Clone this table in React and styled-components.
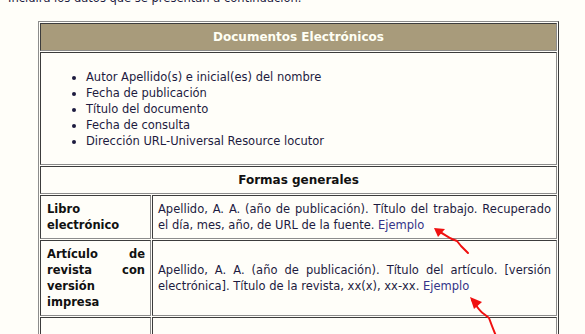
import React from 'react';
import styled, { createGlobalStyle } from 'styled-components';

const GlobalStyle = createGlobalStyle`
	html, body {
		margin: 0;
		background: #fffef9;
		overflow: hidden;
	}
	body {
		font-family: 'DejaVu Sans', Verdana, sans-serif;
		font-size: 11.5px;
		color: #1d1b3f;
	}
`;

const Page = styled.div`
	position: relative;
	width: 585px;
	height: 334px;
	overflow: hidden;
`;

// the page is scrolled a little, so the intro line is cut at the top
const Scrolled = styled.div`
	margin-top: -10px;
	padding: 0 8px;
`;

const Intro = styled.p`
	margin: 0 0 15px;
	line-height: 16px;
`;

const Table = styled.table`
	margin-left: 30px;
	width: 521px;
	border-collapse: separate;
	border-spacing: 1px;
	border: 1px solid;
	border-color: #8c8c8c #3c3c3c #3c3c3c #8c8c8c;
	table-layout: fixed;
`;

const Col = styled.col`
	width: ${(p) => (p.$w ? `${p.$w}px` : 'auto')};
`;

const Cell = styled.td`
	border: 1px solid;
	border-color: #3c3c3c #8c8c8c #8c8c8c #3c3c3c;
	padding: 5px;
	line-height: 16px;
	vertical-align: middle;
	text-align: justify;
	background: #fffef9;
`;

const HeadCell = styled(Cell)`
	background: #a89b7b;
	color: #fffff4;
	font-weight: bold;
	font-size: 12px;
	text-align: center;
`;

const TitleCell = styled(Cell)`
	font-weight: bold;
	font-size: 12px;
	text-align: center;
	color: #111;
`;

const Label = styled(Cell)`
	padding-left: 6px;
	font-weight: bold;
	color: #111;
	vertical-align: ${(p) => (p.$top ? 'top' : 'middle')};
`;

const List = styled.ul`
	margin: 11px 0 10px;
	padding-left: 40px;
	line-height: 16px;
`;

const Link = styled.a`
	color: #343388;
	text-decoration: none;
`;

const Para = styled.p`
	margin: 14px 0;
`;

const Marks = styled.svg`
	position: absolute;
	left: 0;
	top: 0;
	pointer-events: none;
`;

const items = [
	'Autor Apellido(s) e inicial(es) del nombre',
	'Fecha de publicación',
	'Título del documento',
	'Fecha de consulta',
	'Dirección URL-Universal Resource locutor'
];

const App = () => {
	return (
		<Page>
			<GlobalStyle />
			<Scrolled>
				<Intro>Incluirá los datos que se presentan a continuación.</Intro>
				<Table>
					<colgroup>
						<Col $w={111} />
						<Col />
					</colgroup>
					<tbody>
						<tr>
							<HeadCell colSpan={2}>Documentos Electrónicos</HeadCell>
						</tr>
						<tr>
							<Cell colSpan={2}>
								<List>
									{items.map((i) => (
										<li key={i}>{i}</li>
									))}
								</List>
							</Cell>
						</tr>
						<tr>
							<TitleCell colSpan={2}>Formas generales</TitleCell>
						</tr>
						<tr>
							<Label>Libro electrónico</Label>
							<Cell>
								Apellido, A. A. (año de publicación). Título del trabajo. Recuperado el día, mes, año, de URL
								de la fuente. <Link href="#">Ejemplo</Link>
							</Cell>
						</tr>
						<tr>
							<Label $top>Artículo de revista con versión impresa</Label>
							<Cell>
								Apellido, A. A. (año de publicación). Título del artículo. [versión electrónica]. Título de la
								revista, xx(x), xx-xx. <Link href="#">Ejemplo</Link>
							</Cell>
						</tr>
						<tr>
							<Label>
								<Para>Artículo de revista solo en versión electrónica</Para>
							</Label>
							<Cell>
								<Para>
									Apellido, A. A. (año de publicación). Título del artículo. Título de la revista, xx(x),
									xx-xx. Recuperado de URL. <Link href="#">Ejemplo</Link>
								</Para>
							</Cell>
						</tr>
					</tbody>
				</Table>
			</Scrolled>
			<Marks width="585" height="334" viewBox="0 0 585 334">
				<g stroke="#f01010" strokeWidth="2" fill="none" strokeLinecap="round" strokeLinejoin="round">
					<path d="M438 231 C444 234 448 237 452 239 L457 241 L461 246 L468 253" />
					<path d="M472 300 C477 306 479 311 484 314 L489 318 L492 326 L496 336" />
				</g>
				<g fill="#f01010">
					<polygon points="434,228 445,229 438,237" />
					<polygon points="470,297 482,302 474,309" />
				</g>
			</Marks>
		</Page>
	);
};

export default App;
